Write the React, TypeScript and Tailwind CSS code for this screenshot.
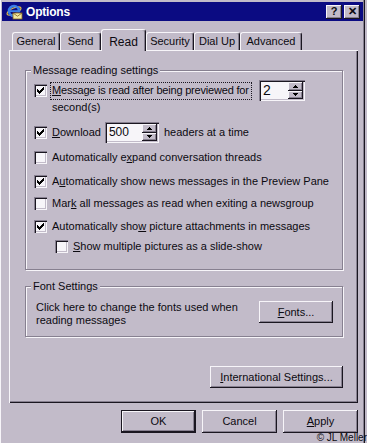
import React from 'react';

// Outlook Express "Options" dialog, Read tab

function U({ children }: { children: React.ReactNode }) {
  return <span className="underline underline-offset-[1px] decoration-[1px]">{children}</span>;
}

function CheckMark() {
  // classic 7x7 pixel tick
  const px: [number, number][] = [
    [6, 0], [5, 1], [6, 1], [0, 2], [4, 2], [5, 2], [6, 2],
    [0, 3], [1, 3], [3, 3], [4, 3], [5, 3], [0, 4], [1, 4], [2, 4], [3, 4], [4, 4],
    [1, 5], [2, 5], [3, 5], [2, 6],
  ];
  return (
    <svg width="7" height="7" viewBox="0 0 7 7" shapeRendering="crispEdges">
      {px.map(([x, y]) => (
        <rect key={`${x}-${y}`} x={x} y={y} width="1" height="1" fill="#000" />
      ))}
    </svg>
  );
}

function CheckBox({ checked }: { checked?: boolean }) {
  return (
    <div className="w-[13px] h-[13px] shrink-0 bg-[#f7f5f9] shadow-[inset_1px_1px_#878090,inset_2px_2px_#1a1620,inset_-1px_-1px_#f7f5f9,inset_-2px_-2px_#c2bbc9] flex items-center justify-center">
      {checked && <CheckMark />}
    </div>
  );
}

function SpinBtn({ up }: { up?: boolean }) {
  return (
    <div className="flex-1 bg-[#c2bbc9] shadow-[inset_-1px_-1px_#1a1620,inset_1px_1px_#f7f5f9,inset_-2px_-2px_#878090] flex items-center justify-center">
      <svg width="5" height="3" viewBox="0 0 5 3" shapeRendering="crispEdges">
        {up ? (
          <path d="M2 0h1v1h1v1h1v1H0V2h1V1h1z" fill="#000" />
        ) : (
          <path d="M0 0h5v1H4v1H3v1H2V2H1V1H0z" fill="#000" />
        )}
      </svg>
    </div>
  );
}

function Spin({ value, className, textClass }: { value: string; className: string; textClass: string }) {
  return (
    <div
      className={`${className} h-[21px] shrink-0 bg-[#f7f5f9] flex p-[2px] shadow-[inset_1px_1px_#878090,inset_2px_2px_#1a1620,inset_-1px_-1px_#f7f5f9,inset_-2px_-2px_#c2bbc9]`}
    >
      <div className={`flex-1 pl-[2px] leading-[17px] ${textClass}`}>{value}</div>
      <div className="w-[15px] flex flex-col">
        <SpinBtn up />
        <SpinBtn />
      </div>
    </div>
  );
}

function Button({ children, className, isDefault }: { children: React.ReactNode; className: string; isDefault?: boolean }) {
  return (
    <div
      className={`${className} h-[23px] flex items-center justify-center bg-[#c2bbc9] ${
        isDefault
          ? 'border border-[#1a1620] shadow-[inset_-1px_-1px_#1a1620,inset_1px_1px_#f7f5f9,inset_-2px_-2px_#878090]'
          : 'shadow-[inset_-1px_-1px_#1a1620,inset_1px_1px_#f7f5f9,inset_-2px_-2px_#878090]'
      }`}
    >
      {children}
    </div>
  );
}

function Group({ label, className, children }: { label: string; className: string; children: React.ReactNode }) {
  return (
    <div className={`${className} relative border border-[#878090] shadow-[1px_1px_#f7f5f9,inset_1px_1px_#f7f5f9]`}>
      <span className="absolute top-[-8px] left-[5px] px-[2px] bg-[#c2bbc9] leading-[14px]">{label}</span>
      {children}
    </div>
  );
}

function Row({ children, className }: { children: React.ReactNode; className: string }) {
  return <div className={`${className} h-[16px] flex items-center gap-[5px] whitespace-nowrap`}>{children}</div>;
}

function IeIcon() {
  return (
    <svg width="17" height="16" viewBox="0 0 17 16">
      <ellipse cx="8" cy="7" rx="7.5" ry="3" fill="none" stroke="#e8c040" strokeWidth="1.2" transform="rotate(-25 8 7)" />
      <circle cx="8" cy="7" r="5" fill="none" stroke="#3a7ee8" strokeWidth="2.6" />
      <rect x="4" y="6.2" width="8" height="1.8" fill="#3a7ee8" />
      <rect x="10" y="8.4" width="4" height="2.2" fill="#0b0b82" />
      <rect x="7" y="9" width="9" height="6" fill="#f0e8a0" stroke="#806020" strokeWidth="0.8" />
      <path d="M7 9l4.5 3.2L16 9" fill="none" stroke="#806020" strokeWidth="0.8" />
    </svg>
  );
}

function CaptionBtn({ children }: { children: React.ReactNode }) {
  return (
    <div className="w-[16px] h-[14px] bg-[#c2bbc9] shadow-[inset_-1px_-1px_#1a1620,inset_1px_1px_#f7f5f9,inset_-2px_-2px_#878090] flex items-center justify-center text-[11px] font-bold leading-none pb-[1px]">
      {children}
    </div>
  );
}

const tabs = [
  { name: 'General', w: 'w-[48px]' },
  { name: 'Send', w: 'w-[41px]' },
  { name: 'Read', w: 'w-[45px]', active: true },
  { name: 'Security', w: 'w-[48px]' },
  { name: 'Dial Up', w: 'w-[46px]' },
  { name: 'Advanced', w: 'w-[62px]' },
];

export default function App() {
  return (
    <div className="w-[367px] h-[443px] overflow-hidden relative bg-[#c2bbc9] text-[11px] text-[#0c0a10] font-['Liberation_Sans',Arial,sans-serif]">
      <div className="w-[365px] h-[443px] shadow-[inset_1px_0_#f7f5f9,inset_-1px_0_#1a1620,inset_-2px_0_#878090]">
        {/* title bar */}
        <div className="mx-[2px] pt-[2px]">
          <div className="h-[19px] bg-[#0b0b82] flex items-center pl-[4px] pr-[3px]">
            <IeIcon />
            <span className="ml-[3px] text-white font-bold text-[12px] tracking-[-0.2px]">Options</span>
            <div className="ml-auto flex gap-[2px]">
              <CaptionBtn>?</CaptionBtn>
              <CaptionBtn>✕</CaptionBtn>
            </div>
          </div>
        </div>

        {/* tabs */}
        <div className="mt-[8px] h-[21px] pl-[12px] flex items-end">
          {tabs.map((t) =>
            t.active ? (
              <div
                key={t.name}
                className={`${t.w} h-[22px] -mb-[1px] relative z-10 bg-[#c2bbc9] rounded-t-[3px] border-l border-t border-[#f7f5f9] border-r border-r-[#1a1620] shadow-[inset_-1px_0_#878090] flex justify-center pt-[3px] text-[12px]`}
              >
                {t.name}
              </div>
            ) : (
              <div
                key={t.name}
                className={`${t.w} h-[18px] rounded-t-[3px] border-l border-t border-[#f7f5f9] border-r border-r-[#1a1620] shadow-[inset_-1px_0_#878090] flex items-center justify-center pb-[1px]`}
              >
                {t.name}
              </div>
            )
          )}
        </div>

        {/* tab panel */}
        <div className="ml-[9px] w-[349px] h-[353px] pl-[16px] pt-[20px] flex flex-col shadow-[inset_1px_1px_#f7f5f9,inset_-1px_-1px_#1a1620,inset_-2px_-2px_#878090]">
          <Group label="Message reading settings" className="w-[318px] h-[200px] pl-[8px] pt-[9px]">
            <div className="h-[21px] flex items-center">
              <CheckBox checked />
              <div className="ml-[3px] w-[202px] h-[18px] border border-dotted border-[#1a1620] pl-[1px] whitespace-nowrap leading-[15px] tracking-[-0.2px]">
                <U>M</U>essage is read after being previewed for
              </div>
              <Spin value="2" className="ml-[7px] w-[46px]" textClass="text-[14px]" />
            </div>
            <div className="h-[13px] leading-[13px] pl-[18px]">second(s)</div>
            <div className="mt-[8px] h-[21px] flex items-center whitespace-nowrap">
              <CheckBox checked />
              <span className="ml-[5px]">
                <U>D</U>ownload
              </span>
              <Spin value="500" className="ml-[4px] w-[54px]" textClass="text-[12px]" />
              <span className="ml-[5px]">headers at a time</span>
            </div>
            <Row className="mt-[6px]">
              <CheckBox />
              <span>
                Automatically e<U>x</U>pand conversation threads
              </span>
            </Row>
            <Row className="mt-[8px]">
              <CheckBox checked />
              <span>
                A<U>u</U>tomatically show news messages in the Preview Pane
              </span>
            </Row>
            <Row className="mt-[6px]">
              <CheckBox />
              <span>
                Mar<U>k</U> all messages as read when exiting a newsgroup
              </span>
            </Row>
            <Row className="mt-[7px]">
              <CheckBox checked />
              <span>
                Automatically sho<U>w</U> picture attachments in messages
              </span>
            </Row>
            <Row className="mt-[4px] pl-[21px]">
              <CheckBox />
              <span>
                <U>S</U>how multiple pictures as a slide-show
              </span>
            </Row>
          </Group>

          <Group label="Font Settings" className="mt-[16px] w-[318px] h-[51px] pl-[10px] pr-[9px] pt-[14px] flex items-start">
            <div className="leading-[13px]">
              Click here to change the fonts used when
              <br />
              reading messages
            </div>
            <Button className="ml-auto w-[74px] !h-[22px]">
              <span>
                <U>F</U>onts...
              </span>
            </Button>
          </Group>

          <div className="mt-[29px] w-[318px] flex justify-end">
            <Button className="w-[133px] !h-[22px]">
              <span>
                <U>I</U>nternational Settings...
              </span>
            </Button>
          </div>
        </div>

        {/* dialog buttons */}
        <div className="mt-[7px] pr-[7px] flex justify-end gap-[6px]">
          <Button className="w-[75px]" isDefault>
            OK
          </Button>
          <Button className="w-[75px]">Cancel</Button>
          <Button className="w-[75px]">
            <span>
              <U>A</U>pply
            </span>
          </Button>
        </div>
      </div>

      <span className="absolute right-0 bottom-0 text-[10px] leading-[11px]">© JL Meller</span>
    </div>
  );
}
